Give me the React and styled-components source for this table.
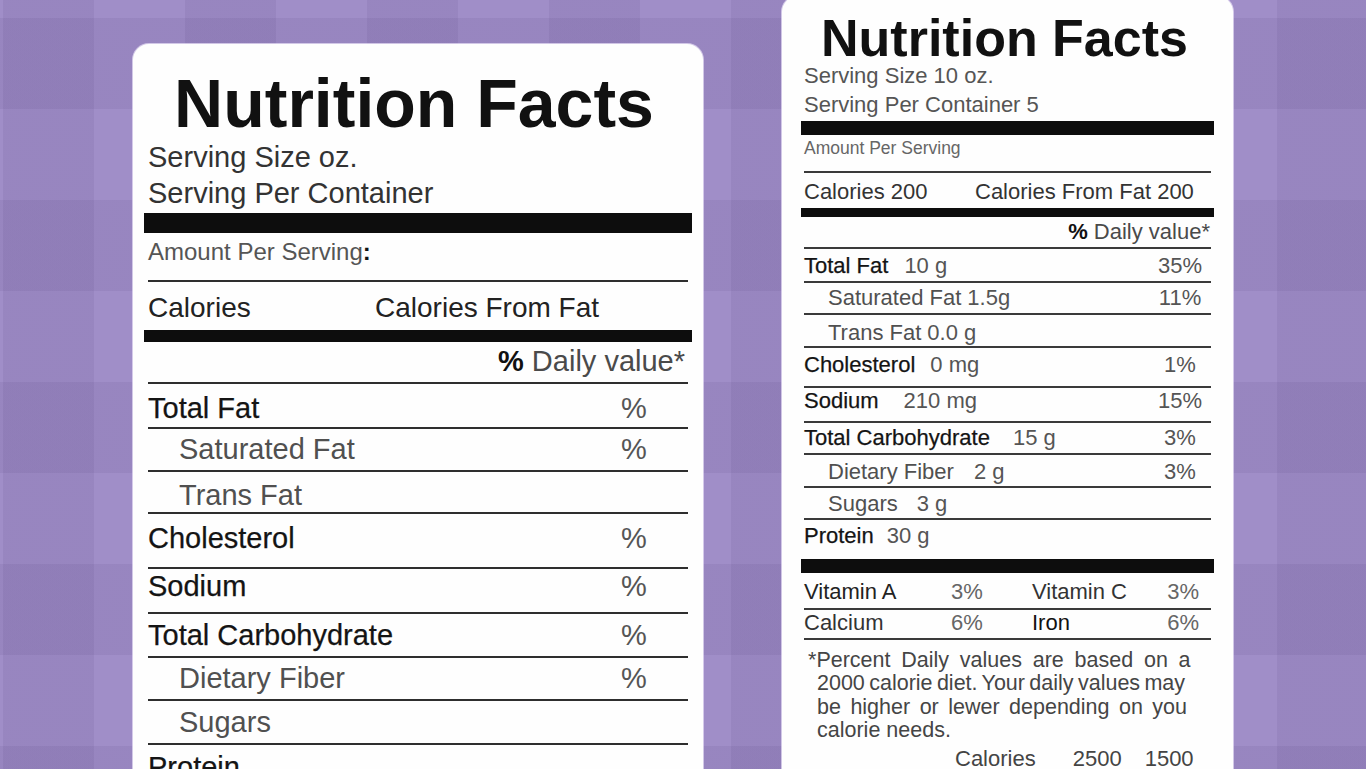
import React from 'react';
import styled, { createGlobalStyle } from 'styled-components';

const GlobalStyle = createGlobalStyle`
  html, body { margin: 0; padding: 0; }
  body {
    font-family: "Liberation Sans", Arial, Helvetica, sans-serif;
    background: #9886c0;
  }
`;

const DARK = 'rgba(50, 30, 90, 0.075)';

const Page = styled.div`
  box-sizing: border-box;
  width: 1366px;
  height: 769px;
  overflow: hidden;
  display: flex;
  align-items: flex-start;
  gap: 79px;
  padding-left: 133px;
  background-color: #a08ec8;
  background-image:
    repeating-linear-gradient(90deg, transparent -88px 3px, ${DARK} 3px 94px),
    repeating-linear-gradient(180deg, transparent -73px 18px, ${DARK} 18px 109px);
`;

const Card = styled.section`
  flex: 0 0 ${p => p.$w}px;
  box-sizing: border-box;
  margin-top: ${p => p.$top}px;
  padding: ${p => p.$pt}px ${p => p.$px}px 40px;
  background: #fefefe;
  border-radius: 16px;
  box-shadow: 0 0 0 1px rgba(235, 228, 248, 0.7);
`;

const Title = styled.h1`
  margin: 0;
  padding-right: ${p => p.$shift}px;
  font-size: ${p => p.$size}px;
  line-height: ${p => p.$lh}px;
  font-weight: 700;
  text-align: center;
  color: #111;
  white-space: nowrap;
`;

const InfoLine = styled.div`
  font-size: ${p => p.$size}px;
  line-height: ${p => p.$lh}px;
  color: ${p => p.$color || '#333'};
  white-space: nowrap;
`;

const ThickBar = styled.div`
  height: ${p => p.$h}px;
  margin: ${p => p.$mt || 0}px -${p => p.$out}px 0;
  background: #0d0d0d;
`;

const Row = styled.div`
  box-sizing: border-box;
  display: flex;
  align-items: flex-start;
  justify-content: ${p => (p.$end ? 'flex-end' : 'flex-start')};
  height: ${p => p.$h}px;
  padding: ${p => p.$pt}px ${p => p.$pr || 0}px 0 ${p => p.$indent || 0}px;
  font-size: ${p => p.$size}px;
  line-height: 1;
  color: ${p => p.$color || '#222'};
  border-bottom: ${p => (p.$rule ? `2px solid ${p.$ruleColor || '#2e2e2e'}` : 'none')};
  white-space: nowrap;
`;

const VitRow = styled(Row)`
  display: grid;
  grid-template-columns: 147px 81px 1fr auto;
`;

const Label = styled.span`
  color: ${p => (p.$main ? '#141414' : '#505050')};
  ${p => p.$main && '-webkit-text-stroke: 0.25px #141414;'}
`;

const Amount = styled.span`
  margin-left: ${p => p.$gap}px;
  color: #555;
`;

const Pct = styled.span`
  margin-left: auto;
  width: ${p => p.$w}px;
  text-align: center;
  color: #555;
`;

const Fixed = styled.span`
  display: inline-block;
  width: ${p => p.$w}px;
`;

const Muted = styled.span`
  color: ${p => p.$color || '#555'};
`;

const DailyValue = styled.span`
  color: #4a4a4a;
  b {
    color: #111;
    font-weight: 700;
  }
`;

const Colon = styled.b`
  color: #111;
  font-weight: 700;
`;

const Footnote = styled.div`
  margin-top: 8.7px;
  padding-left: 13px;
  font-size: 21.5px;
  line-height: 23.6px;
  color: #454545;
`;

const FootLine = styled.div`
  white-space: nowrap;
  word-spacing: ${p => p.$ws}px;
`;

const Star = styled.span`
  margin-left: -9px;
`;

const CalTable = styled.div`
  display: flex;
  margin-top: 4.3px;
  padding-left: 151px;
  font-size: 22px;
  line-height: 24px;
  color: #444;
  white-space: nowrap;
`;

const CalCell = styled.span`
  margin-left: ${p => p.$gap || 0}px;
`;

const leftRows = [
  { label: 'Total Fat', main: true, h: 45, pt: 9.5, pct: '%' },
  { label: 'Saturated Fat', h: 43, pt: 5.5, pct: '%' },
  { label: 'Trans Fat', h: 42, pt: 8.5 },
  { label: 'Cholesterol', main: true, h: 55, pt: 9.5, pct: '%' },
  { label: 'Sodium', main: true, h: 45, pt: 3.2, pct: '%' },
  { label: 'Total Carbohydrate', main: true, h: 44, pt: 6.5, pct: '%' },
  { label: 'Dietary Fiber', h: 43, pt: 5.5, pct: '%' },
  { label: 'Sugars', h: 44, pt: 7.2 },
  { label: 'Protein', main: true, h: 45, pt: 7.5, last: true },
];

const rightRows = [
  { label: 'Total Fat', main: true, amt: '10 g', gap: 16, h: 34, pt: 6.4, pct: '35%' },
  { label: 'Saturated Fat', amt: '1.5g', gap: 6, h: 32, pt: 4.4, pct: '11%' },
  { label: 'Trans Fat', amt: '0.0 g', gap: 6, h: 33, pt: 7.1 },
  { label: 'Cholesterol', main: true, amt: '0 mg', gap: 15, h: 40, pt: 6.4, pct: '1%' },
  { label: 'Sodium', main: true, amt: '210 mg', gap: 25, h: 35, pt: 2.4, pct: '15%' },
  { label: 'Total Carbohydrate', main: true, amt: '15 g', gap: 23, h: 32, pt: 4.4, pct: '3%' },
  { label: 'Dietary Fiber', amt: '2 g', gap: 20, h: 33, pt: 5.7, pct: '3%' },
  { label: 'Sugars', amt: '3 g', gap: 19, h: 32, pt: 5.1 },
  { label: 'Protein', main: true, amt: '30 g', gap: 13, h: 39, pt: 4.7, last: true },
];

function BlankLabel() {
  return (
    <Card $w={570} $top={44} $pt={22} $px={15}>
      <Title $size={68} $lh={74} $shift={8}>Nutrition Facts</Title>
      <InfoLine $size={29} $lh={34}>Serving Size oz.</InfoLine>
      <InfoLine $size={29} $lh={38}>Serving Per Container</InfoLine>
      <ThickBar $h={20} $mt={1} $out={4} />
      <Row $h={49} $pt={6.7} $size={24} $rule $color="#555">
        <span>Amount Per Serving</span>
        <Colon>:</Colon>
      </Row>
      <Row $h={48} $pt={12.3} $size={28} $color="#222">
        <Fixed $w={227}>Calories</Fixed>
        <span>Calories From Fat</span>
      </Row>
      <ThickBar $h={12} $out={4} />
      <Row $h={42} $pt={5.2} $size={29} $end $pr={3} $rule>
        <DailyValue><b>%</b> Daily value*</DailyValue>
      </Row>
      {leftRows.map(r => (
        <Row
          key={r.label}
          $h={r.h}
          $pt={r.pt}
          $size={29}
          $indent={r.main ? 0 : 31}
          $pr={24}
          $rule={!r.last}
        >
          <Label $main={r.main}>{r.label}</Label>
          {r.pct && <Pct $w={60}>{r.pct}</Pct>}
        </Row>
      ))}
    </Card>
  );
}

function FilledLabel() {
  return (
    <Card $w={451} $top={-4} $pt={17} $px={22}>
      <Title $size={52} $lh={50} $shift={6}>Nutrition Facts</Title>
      <InfoLine $size={22} $lh={26} $color="#555">Serving Size 10 oz.</InfoLine>
      <InfoLine $size={22} $lh={32} $color="#555">Serving Per Container 5</InfoLine>
      <ThickBar $h={14} $out={3} />
      <Row $h={38} $pt={5.2} $size={17.5} $rule $ruleColor="#3a3a3a" $color="#666">
        Amount Per Serving
      </Row>
      <Row $h={35} $pt={8.4} $size={22} $color="#333">
        <Fixed $w={171}>Calories 200</Fixed>
        <span>Calories From Fat 200</span>
      </Row>
      <ThickBar $h={9} $out={3} />
      <Row $h={32} $pt={4.4} $size={22} $end $pr={1} $rule $ruleColor="#3a3a3a">
        <DailyValue><b>%</b> Daily value*</DailyValue>
      </Row>
      {rightRows.map(r => (
        <Row
          key={r.label}
          $h={r.h}
          $pt={r.pt}
          $size={22}
          $indent={r.main ? 0 : 24}
          $pr={1}
          $rule={!r.last}
          $ruleColor="#3a3a3a"
        >
          <Label $main={r.main}>{r.label}</Label>
          <Amount $gap={r.gap}>{r.amt}</Amount>
          {r.pct && <Pct $w={60}>{r.pct}</Pct>}
        </Row>
      ))}
      <ThickBar $h={14} $out={3} />
      <VitRow $h={37} $pt={8.4} $size={22} $pr={12} $rule $ruleColor="#3a3a3a">
        <Muted $color="#222">Vitamin A</Muted>
        <Muted $color="#666">3%</Muted>
        <Muted $color="#333">Vitamin C</Muted>
        <Muted $color="#666">3%</Muted>
      </VitRow>
      <VitRow $h={30} $pt={2.1} $size={22} $pr={12} $rule $ruleColor="#3a3a3a">
        <Muted $color="#333">Calcium</Muted>
        <Muted $color="#666">6%</Muted>
        <Muted $color="#111">Iron</Muted>
        <Muted $color="#666">6%</Muted>
      </VitRow>
      <Footnote>
        <FootLine $ws={4.8}><Star>*</Star>Percent Daily values are based on a</FootLine>
        <FootLine $ws={-1.6}>2000 calorie diet. Your daily values may</FootLine>
        <FootLine $ws={3.5}>be higher or lewer depending on you</FootLine>
        <FootLine $ws={0}>calorie needs.</FootLine>
      </Footnote>
      <CalTable>
        <CalCell>Calories</CalCell>
        <CalCell $gap={37}>2500</CalCell>
        <CalCell $gap={23}>1500</CalCell>
      </CalTable>
    </Card>
  );
}

export default function App() {
  return (
    <>
      <GlobalStyle />
      <Page>
        <BlankLabel />
        <FilledLabel />
      </Page>
    </>
  );
}
